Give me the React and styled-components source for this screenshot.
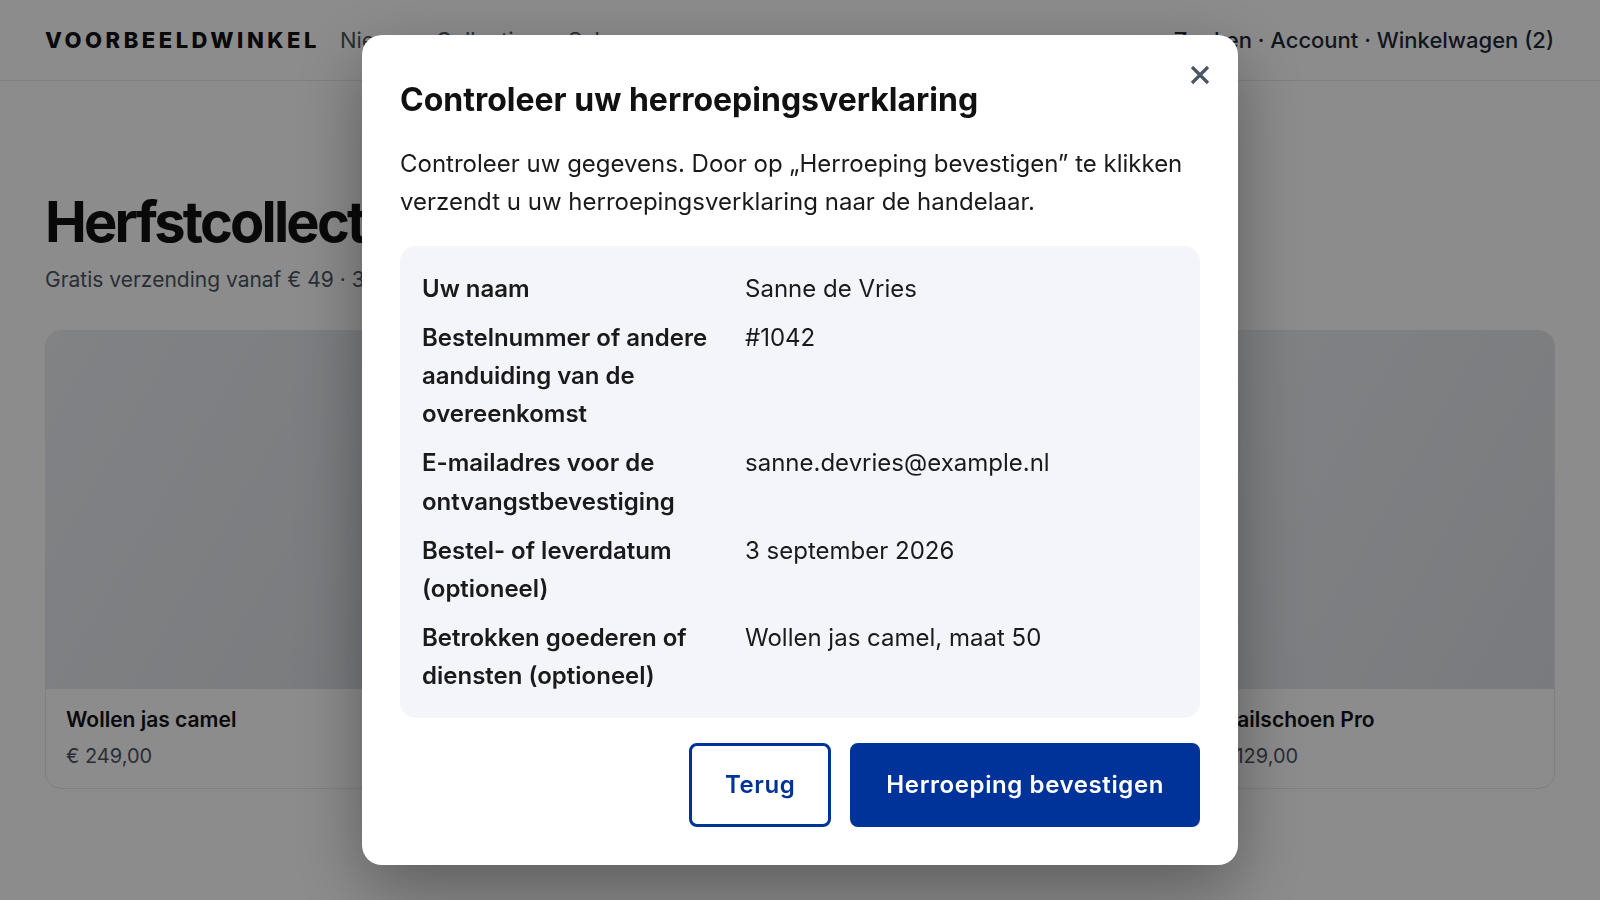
import React from "react";
import styled, { createGlobalStyle } from "styled-components";

const GlobalStyle = createGlobalStyle`
  * { box-sizing: border-box; }
  html, body { margin: 0; padding: 0; }
  body {
    font-family: Inter, "Noto Sans", "Liberation Sans", sans-serif;
    color: #111827;
    background: #ffffff;
    -webkit-font-smoothing: antialiased;
  }
`;

const Page = styled.div`
  min-height: 100vh;
  background: #ffffff;
`;

const Header = styled.header`
  height: 81px;
  display: flex;
  align-items: center;
  justify-content: space-between;
  padding: 0 46px 0 45px;
  border-bottom: 1px solid #e5e7eb;
`;

const HeaderLeft = styled.div`
  display: flex;
  align-items: center;
  gap: 20px;
`;

const Brand = styled.div`
  font-size: 22px;
  font-weight: 800;
  letter-spacing: 0.16em;
  color: #111111;
`;

const NavLinks = styled.nav`
  display: flex;
  gap: 30px;
  font-size: 22px;
  color: #4b5563;
`;

const HeaderRight = styled.div`
  font-size: 22px;
  font-weight: 500;
  color: #1f2937;
`;

const Main = styled.main`
  padding: 0 45px;
`;

const Hero = styled.h1`
  margin: 111px 0 0;
  font-size: 56px;
  line-height: 1.1;
  font-weight: 700;
  letter-spacing: -0.05em;
  color: #111111;
`;

const Sub = styled.p`
  margin: 10px 0 0;
  font-size: 21px;
  line-height: 1.5;
  color: #4b5563;
`;

const Grid = styled.div`
  margin-top: 35px;
  display: grid;
  grid-template-columns: repeat(4, 1fr);
  gap: 24px;
`;

const Card = styled.div`
  border: 1px solid #e5e7eb;
  border-radius: 16px;
  overflow: hidden;
  background: #ffffff;
`;

const CardImage = styled.div`
  aspect-ratio: 1 / 1;
  background: linear-gradient(120deg, #eceef2 0%, #e3e6eb 55%, #dcdfe4 100%);
`;

const CardBody = styled.div`
  padding: 19px 20px 20px;
  display: flex;
  flex-direction: column;
  gap: 12px;
`;

const CardTitle = styled.div`
  font-size: 21px;
  line-height: 24px;
  font-weight: 600;
  color: #111111;
`;

const CardPrice = styled.div`
  font-size: 20px;
  line-height: 24px;
  color: #4b5563;
`;

const Overlay = styled.div`
  position: fixed;
  inset: 0;
  background: rgba(0, 0, 0, 0.45);
  display: flex;
  align-items: center;
  justify-content: center;
`;

const Modal = styled.div`
  position: relative;
  width: 876px;
  background: #ffffff;
  border-radius: 20px;
  padding: 41px 38px 38px;
  box-shadow: 0 24px 70px rgba(0, 0, 0, 0.35);
`;

const CloseButton = styled.button`
  position: absolute;
  top: 20px;
  right: 18px;
  width: 40px;
  height: 40px;
  border: none;
  background: transparent;
  padding: 0;
  display: flex;
  align-items: center;
  justify-content: center;
  cursor: pointer;
  color: #4b5563;
`;

const Title = styled.h2`
  margin: 0;
  font-size: 32px;
  line-height: 48px;
  font-weight: 700;
  letter-spacing: 0;
  color: #111111;
`;

const Intro = styled.p`
  margin: 21px 0 0;
  font-size: 24px;
  line-height: 1.6;
  color: #1a1a1a;
`;

const Summary = styled.dl`
  margin: 24px 0 0;
  padding: 24px 22px 22px;
  background: #f4f5fa;
  border-radius: 16px;
  display: grid;
  grid-template-columns: 299px 1fr;
  column-gap: 24px;
  row-gap: 10.5px;
  font-size: 24px;
  line-height: 1.6;
  color: #1a1a1a;
`;

const Label = styled.dt`
  margin: 0;
  font-weight: 600;
`;

const Value = styled.dd`
  margin: 0;
  font-weight: 400;
`;

const Actions = styled.div`
  margin-top: 25px;
  display: flex;
  justify-content: flex-end;
  gap: 19px;
`;

const Button = styled.button`
  font-family: Inter, "Liberation Sans", sans-serif;
  font-size: 24px;
  font-weight: 600;
  letter-spacing: 0.025em;
  line-height: 1.6;
  padding: 20px 33px;
  border-radius: 8px;
  border: 3px solid #003399;
  cursor: pointer;
  background: ${(p) => (p.$primary ? "#003399" : "#ffffff")};
  color: ${(p) => (p.$primary ? "#ffffff" : "#003399")};
`;

const products = [
  { name: "Wollen jas camel", price: "€ 249,00" },
  { name: "Merino trui grijs", price: "€ 89,00" },
  { name: "Leren enkellaars", price: "€ 179,00" },
  { name: "Trailschoen Pro", price: "€ 129,00" },
];

const rows = [
  ["Uw naam", "Sanne de Vries"],
  ["Bestelnummer of andere aanduiding van de overeenkomst", "#1042"],
  ["E-mailadres voor de ontvangstbevestiging", "sanne.devries@example.nl"],
  ["Bestel- of leverdatum (optioneel)", "3 september 2026"],
  ["Betrokken goederen of diensten (optioneel)", "Wollen jas camel, maat 50"],
];

export default function App() {
  return (
    <>
      <GlobalStyle />
      <Page>
        <Header>
          <HeaderLeft>
            <Brand>VOORBEELDWINKEL</Brand>
            <NavLinks>
              <span>Nieuw</span>
              <span>Collecties</span>
              <span>Sale</span>
            </NavLinks>
          </HeaderLeft>
          <HeaderRight>Zoeken · Account · Winkelwagen (2)</HeaderRight>
        </Header>
        <Main>
          <Hero>Herfstcollectie 2026</Hero>
          <Sub>Gratis verzending vanaf € 49 · 30 dagen bedenktijd</Sub>
          <Grid>
            {products.map((p) => (
              <Card key={p.name}>
                <CardImage />
                <CardBody>
                  <CardTitle>{p.name}</CardTitle>
                  <CardPrice>{p.price}</CardPrice>
                </CardBody>
              </Card>
            ))}
          </Grid>
        </Main>
        <Overlay>
          <Modal role="dialog" aria-modal="true">
            <CloseButton aria-label="Sluiten">
              <svg width="20" height="20" viewBox="0 0 20 20">
                <path d="M2 2 L18 18 M18 2 L2 18" stroke="currentColor" strokeWidth="3.2" />
              </svg>
            </CloseButton>
            <Title>Controleer uw herroepingsverklaring</Title>
            <Intro>
              Controleer uw gegevens. Door op „Herroeping bevestigen” te klikken verzendt u uw
              herroepingsverklaring naar de handelaar.
            </Intro>
            <Summary>
              {rows.map(([l, v]) => (
                <React.Fragment key={l}>
                  <Label>{l}</Label>
                  <Value>{v}</Value>
                </React.Fragment>
              ))}
            </Summary>
            <Actions>
              <Button>Terug</Button>
              <Button $primary>Herroeping bevestigen</Button>
            </Actions>
          </Modal>
        </Overlay>
      </Page>
    </>
  );
}
